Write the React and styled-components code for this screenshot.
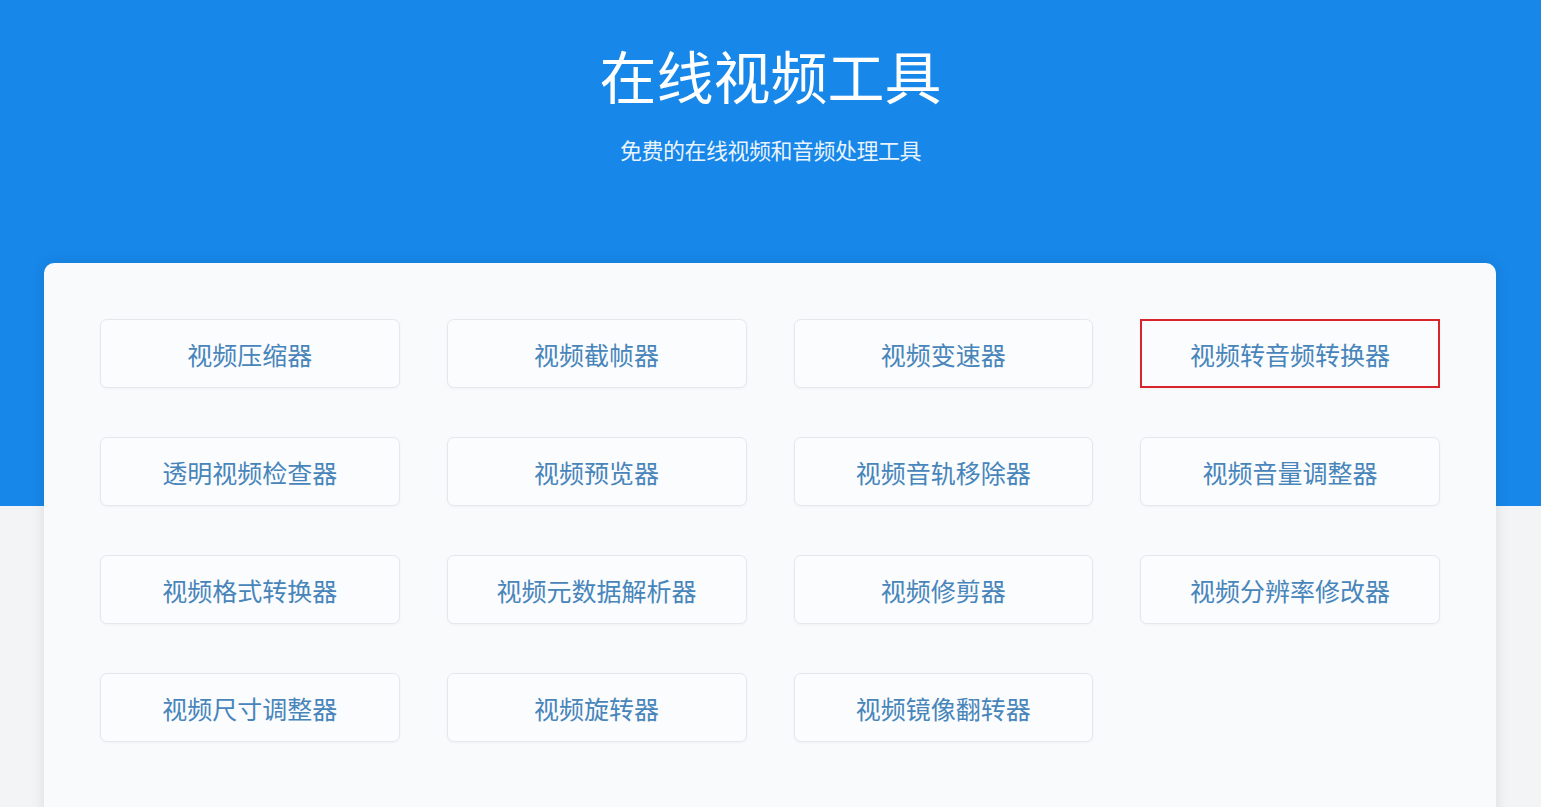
import React from "react";
import styled, { createGlobalStyle } from "styled-components";

const Global = createGlobalStyle`
  html, body { margin: 0; padding: 0; }
  body {
    background: #f3f4f5;
    font-family: "Noto Sans CJK SC", "Noto Sans", sans-serif;
    overflow: hidden;
  }
`;

const Page = styled.div`
  min-height: 807px;
  display: flex;
  flex-direction: column;
`;

const Hero = styled.header`
  height: 506px;
  background: #1787e9;
  display: flex;
  flex-direction: column;
  align-items: center;
  color: #fff;
  box-sizing: border-box;
  padding-top: 34px;
`;

const Title = styled.h1`
  margin: 0;
  font-size: 57px;
  font-weight: 400;
  line-height: 80px;
  letter-spacing: 0;
`;

const Subtitle = styled.p`
  margin: 20px 0 0;
  font-size: 22px;
  line-height: 30px;
  letter-spacing: -0.5px;
  color: rgba(255, 255, 255, 0.92);
`;

const Card = styled.main`
  margin: -243px 45px 0 44px;
  background: #f8fafc;
  border-radius: 10px;
  box-shadow: 0 0 14px rgba(0, 0, 0, 0.1);
  padding: 56px 56px 80px;
  display: grid;
  grid-template-columns: repeat(4, 1fr);
  column-gap: 47px;
  row-gap: 49px;
`;

const Tool = styled.a`
  height: 69px;
  box-sizing: border-box;
  display: flex;
  align-items: center;
  justify-content: center;
  background: #fbfcfe;
  border: ${p => (p.$active ? "2px solid #d8252b" : "1px solid #e4e8ed")};
  border-radius: ${p => (p.$active ? "0" : "7px")};
  box-shadow: 0 1px 3px rgba(0, 0, 0, 0.04);
  color: #4785ba;
  font-size: 25px;
  text-decoration: none;
  cursor: pointer;
`;

const tools = [
  "视频压缩器",
  "视频截帧器",
  "视频变速器",
  "视频转音频转换器",
  "透明视频检查器",
  "视频预览器",
  "视频音轨移除器",
  "视频音量调整器",
  "视频格式转换器",
  "视频元数据解析器",
  "视频修剪器",
  "视频分辨率修改器",
  "视频尺寸调整器",
  "视频旋转器",
  "视频镜像翻转器",
];

export default function App() {
  return (
    <Page>
      <Global />
      <Hero>
        <Title>在线视频工具</Title>
        <Subtitle>免费的在线视频和音频处理工具</Subtitle>
      </Hero>
      <Card>
        {tools.map((t, i) => (
          <Tool key={t} $active={i === 3}>
            {t}
          </Tool>
        ))}
      </Card>
    </Page>
  );
}
